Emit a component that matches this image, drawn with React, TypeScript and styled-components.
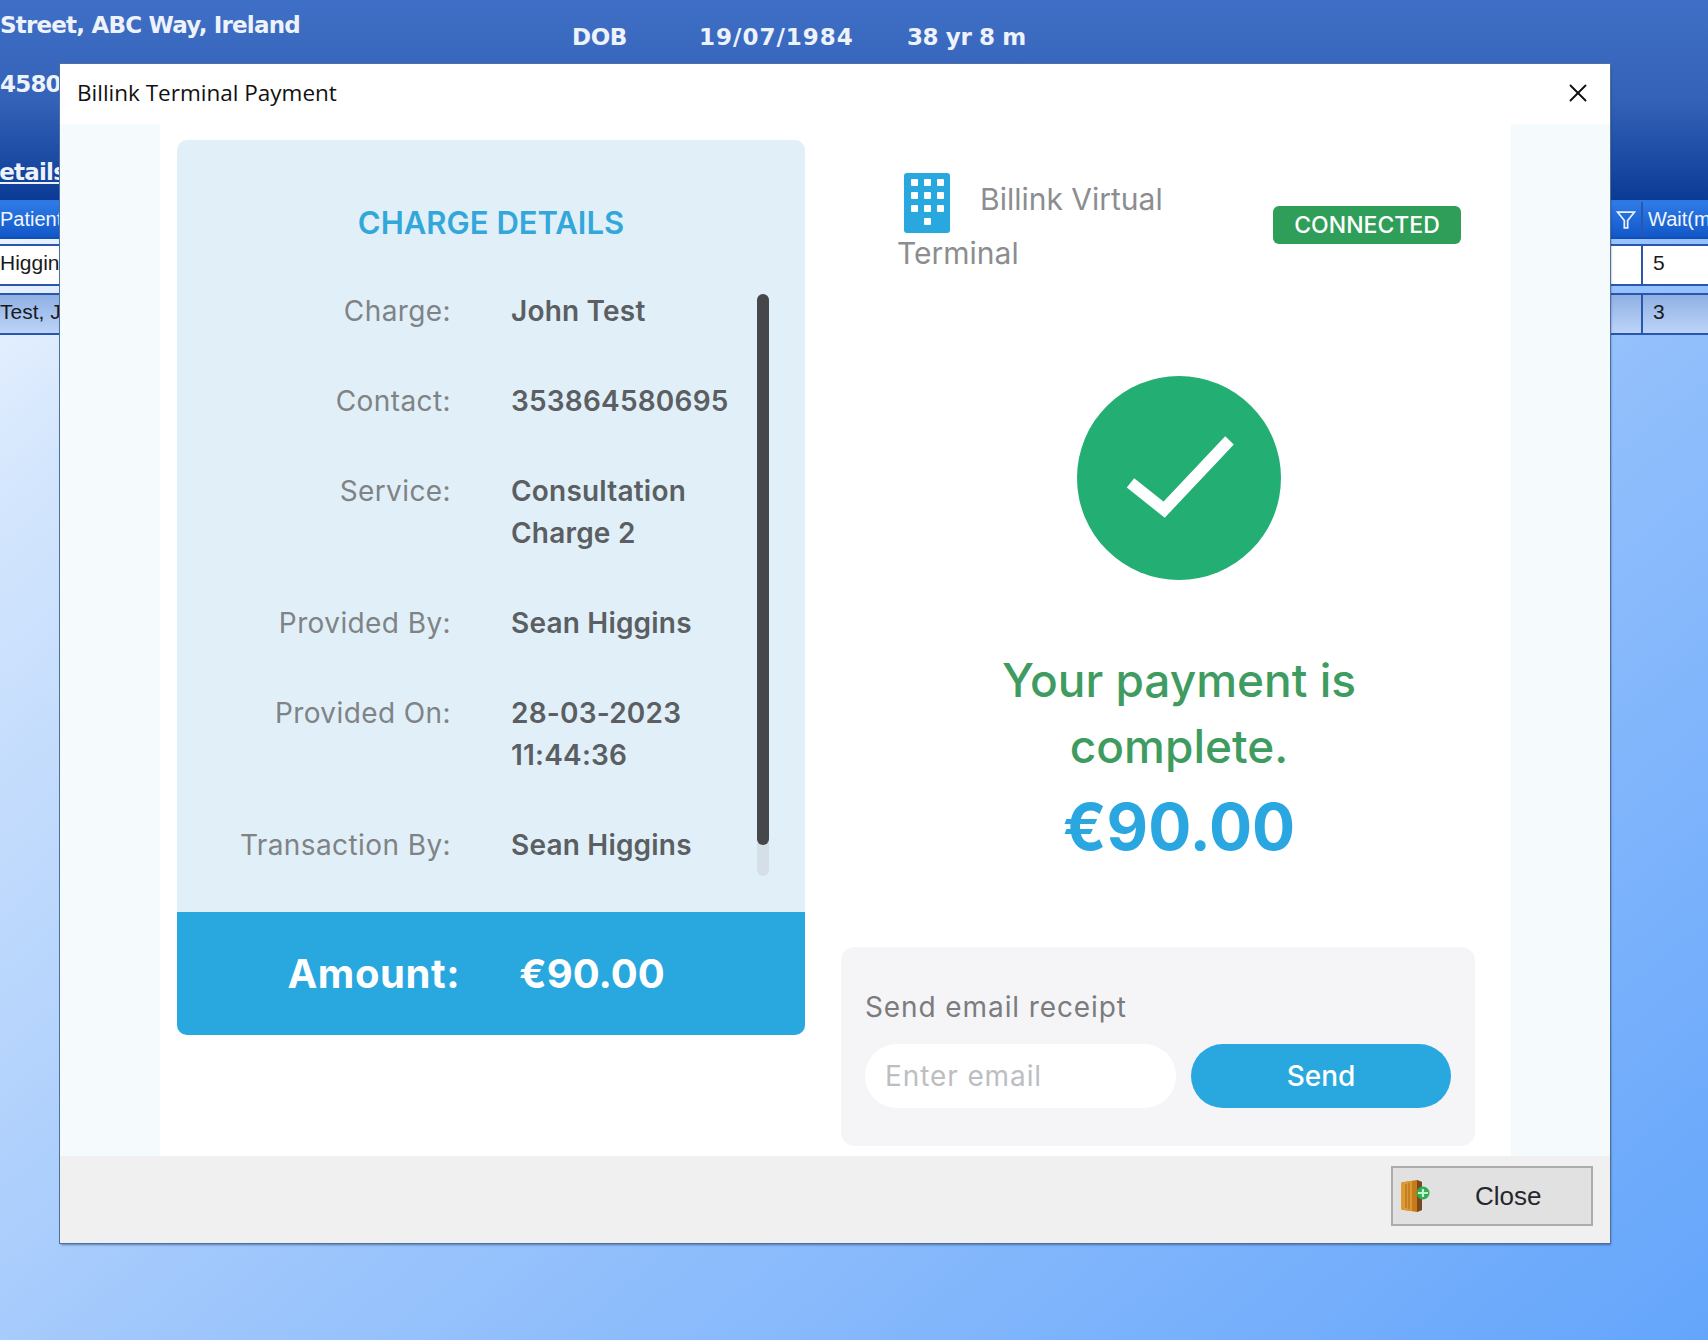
import React from "react";
import styled, { createGlobalStyle } from "styled-components";
import { X } from "lucide-react";

const Global = createGlobalStyle`
  html, body { margin: 0; padding: 0; }
  body { font-family: "Inter", "Liberation Sans", sans-serif; background: #7fb4fb; }
`;

const Page = styled.div`
  position: relative;
  width: 1708px;
  height: 1340px;
  overflow: hidden;
  background: linear-gradient(140deg, #ffffff 0%, #d4e6fd 18%, #9cc5fc 55%, #64a5fb 100%);
`;

const Header = styled.header`
  height: 200px;
  box-sizing: border-box;
  background: linear-gradient(180deg, #3f6fc6 0%, #3462b8 50%, #0b3b96 100%);
  color: #eef2fa;
  font-family: "DejaVu Sans", sans-serif;
  font-weight: 700;
  display: flex;
`;

const AddressCol = styled.div`
  width: 572px;
  font-size: 23px;
  letter-spacing: -0.8px;
`;

const AddressLine = styled.div<{ $top: number }>`
  margin-top: ${(p) => p.$top}px;
  line-height: 30px;
`;

const LinkLine = styled(AddressLine)`
  text-decoration: underline;
  margin-left: -19px;
`;

const PatientMeta = styled.div`
  display: flex;
  font-size: 23px;
  letter-spacing: -0.4px;
  padding-top: 22px;
  line-height: 30px;
`;

const MetaItem = styled.span<{ $w: number; $spacing?: number }>`
  width: ${(p) => p.$w}px;
  letter-spacing: ${(p) => p.$spacing ?? -0.4}px;
  white-space: nowrap;
`;

const TableRow = styled.div<{ $kind: "head" | "plain" | "selected"; $h: number; $top: number }>`
  display: flex;
  justify-content: space-between;
  height: ${(p) => p.$h}px;
  margin-top: ${(p) => p.$top}px;
  box-sizing: border-box;
  font-family: "Liberation Sans", sans-serif;
  font-size: ${(p) => (p.$kind === "head" ? 20 : 21)}px;
  line-height: ${(p) => (p.$kind === "head" ? p.$h - 4 : p.$h - 8)}px;
  color: ${(p) => (p.$kind === "head" ? "#f2f6ff" : "#1a1a1a")};
  border-top: 2px solid ${(p) => (p.$kind === "head" ? "#2e78e0" : "#2a56ad")};
  border-bottom: 2px solid ${(p) => (p.$kind === "head" ? "#0f4fb8" : "#2a56ad")};
  background: ${(p) =>
    p.$kind === "head"
      ? "linear-gradient(180deg, #2f7be8 0%, #1257c8 100%)"
      : p.$kind === "selected"
      ? "linear-gradient(180deg, #8fb0e4 0%, #bcd4f8 100%)"
      : "#ffffff"};
`;

const LeftCell = styled.span`
  width: 60px;
  overflow: hidden;
  white-space: nowrap;
`;

const RightCells = styled.div`
  display: flex;
  width: 98px;
`;

const FilterCell = styled.span`
  width: 31px;
  display: flex;
  align-items: center;
  justify-content: center;
`;

const WaitCell = styled.span`
  flex: 1;
  border-left: 2px solid #2a56ad;
  padding-left: 5px;
  overflow: hidden;
  white-space: nowrap;
`;

const ValueText = styled.span`
  margin-left: 5px;
`;

const Modal = styled.div`
  position: absolute;
  left: 60px;
  top: 64px;
  width: 1550px;
  height: 1179px;
  box-sizing: border-box;
  display: flex;
  flex-direction: column;
  background: #ffffff;
  outline: 1px solid #4f6f9e;
  box-shadow: 1px 2px 2px rgba(30, 60, 110, 0.55);
`;

const TitleBar = styled.div`
  height: 60px;
  flex: none;
  display: flex;
  align-items: center;
  justify-content: space-between;
  padding: 0 17px 3px 17px;
  box-sizing: border-box;
  font-family: "Open Sans", sans-serif;
  font-size: 22.5px;
  color: #111;
`;

const Body = styled.div`
  flex: 1;
  min-height: 0;
  background: #f5fafd;
  padding: 0 99px 0 100px;
  display: flex;
`;

const Sheet = styled.div`
  flex: 1;
  background: #ffffff;
  display: flex;
  gap: 36px;
  padding: 16px 36px 10px 17px;
`;

const ChargeCard = styled.section`
  width: 628px;
  height: 895px;
  flex: none;
  display: flex;
  flex-direction: column;
  border-radius: 10px;
  overflow: hidden;
  background: #e1f0f8;
`;

const CardTitle = styled.h2`
  margin: 0;
  padding-top: 64px;
  text-align: center;
  color: #33a7da;
  font-size: 31px;
  line-height: 38px;
  font-weight: 600;
`;

const CardMiddle = styled.div`
  flex: 1;
  display: flex;
  min-height: 0;
  padding-top: 48px;
`;

const Details = styled.div`
  flex: 1;
  display: flex;
  flex-direction: column;
  gap: 48px;
`;

const DetailRow = styled.div`
  display: flex;
  gap: 60px;
  font-size: 28px;
  line-height: 42px;
`;

const DetailLabel = styled.span`
  width: 274px;
  flex: none;
  text-align: right;
  color: #808386;
  letter-spacing: 0.4px;
`;

const DetailValue = styled.span`
  color: #5b5e62;
  font-weight: 600;
  white-space: pre-line;
  letter-spacing: 0.2px;
`;

const ScrollTrack = styled.div`
  width: 12px;
  height: 582px;
  margin: 4px 36px 0 0;
  border-radius: 6px;
  background: #d5dfe8;
  flex: none;
`;

const ScrollThumb = styled.div`
  height: 551px;
  border-radius: 6px;
  background: #45474a;
`;

const AmountBar = styled.div`
  height: 123px;
  flex: none;
  background: #29a8e0;
  color: #fff;
  display: flex;
  align-items: center;
  justify-content: center;
  gap: 59px;
  font-size: 40px;
  font-weight: 700;
  padding-right: 30px;
`;

const AmountLabel = styled.span`
  letter-spacing: 0.6px;
`;

const PayPanel = styled.section`
  flex: 1;
  min-width: 0;
  display: flex;
  flex-direction: column;
`;

const PanelHead = styled.div`
  display: flex;
  justify-content: space-between;
  align-items: flex-start;
  padding: 33px 14px 0 56px;
`;

const Brand = styled.div`
  width: 290px;
  font-size: 30px;
  line-height: 40px;
  color: #8b8d90;
  font-weight: 400;
`;

const BrandIcon = styled.svg`
  width: 46px;
  height: 60px;
  margin: 0 30px 0 7px;
  vertical-align: -23px;
`;

const Badge = styled.span`
  height: 38px;
  width: 188px;
  border-radius: 6px;
  background: #2f9e58;
  color: #fff;
  display: flex;
  align-items: center;
  justify-content: center;
  font-size: 23px;
  font-weight: 500;
  margin-top: 33px;
`;

const Success = styled.div`
  display: flex;
  flex-direction: column;
  align-items: center;
  padding: 103px 0 0 42px;
  width: 634px;
  box-sizing: border-box;
`;

const Check = styled.svg`
  width: 204px;
  height: 204px;
`;

const Message = styled.p`
  margin: 67px 0 0;
  text-align: center;
  color: #3f9c60;
  font-size: 46px;
  line-height: 66px;
  font-weight: 500;
`;

const Price = styled.div`
  margin-top: 6px;
  color: #2aa7e0;
  font-size: 64px;
  line-height: 84px;
  font-weight: 700;
`;

const Receipt = styled.div`
  margin-top: 78px;
  height: 201px;
  box-sizing: border-box;
  border-radius: 14px;
  background: #f5f5f7;
  padding: 38px 24px 0;
`;

const ReceiptTitle = styled.div`
  color: #7a7c80;
  font-size: 28px;
  line-height: 44px;
  letter-spacing: 0.9px;
`;

const ReceiptForm = styled.div`
  display: flex;
  gap: 15px;
  margin-top: 15px;
`;

const EmailInput = styled.input`
  width: 311px;
  height: 64px;
  box-sizing: border-box;
  border: 0;
  border-radius: 32px;
  background: #fff;
  padding: 0 20px;
  font: inherit;
  font-size: 28px;
  letter-spacing: 0.9px;
  outline: none;
  &::placeholder { color: #bdbec2; opacity: 1; }
`;

const SendButton = styled.button`
  width: 260px;
  height: 64px;
  border: 0;
  border-radius: 32px;
  background: #29a8e0;
  color: #fff;
  font: inherit;
  font-size: 28px;
  font-weight: 500;
`;

const Footer = styled.footer`
  height: 87px;
  flex: none;
  background: #f0f0f0;
  display: flex;
  justify-content: flex-end;
  align-items: flex-start;
  padding: 10px 17px 0 0;
  box-sizing: border-box;
`;

const CloseButton = styled.button`
  width: 202px;
  height: 60px;
  box-sizing: border-box;
  display: flex;
  align-items: center;
  background: #e1e1e1;
  border: 2px solid #adadad;
  padding: 0 0 0 5px;
  font-family: "Liberation Sans", sans-serif;
  font-size: 26px;
  color: #26262c;
`;

const CloseLabel = styled.span`
  margin-left: 43px;
`;

const rows: [string, string][] = [
  ["Charge:", "John Test"],
  ["Contact:", "353864580695"],
  ["Service:", "Consultation\nCharge 2"],
  ["Provided By:", "Sean Higgins"],
  ["Provided On:", "28-03-2023\n11:44:36"],
  ["Transaction By:", "Sean Higgins"],
];

const keypadDots = [0, 1, 2, 3].flatMap((r) =>
  (r === 3 ? [1] : [0, 1, 2]).map((c) => ({ x: 7 + c * 13, y: 10 + r * 13, k: `${r}-${c}` }))
);

const DoorIcon = () => (
  <svg width="34" height="34" viewBox="0 0 34 34">
    <path d="M3 5 Q3 3 6 3 L19 1 L24 3 L24 31 L19 33 L6 31 Q3 31 3 29 Z" fill="#c67a1c" />
    <path d="M3 5 Q3 3 6 3 L14 2 L14 32 L6 31 Q3 31 3 29 Z" fill="#dd9a33" />
    <path d="M8 5 V29 M11 4 V30" stroke="#a9651a" strokeWidth="1" />
    <path d="M19 1 L24 3 L24 31 L19 33 Z" fill="#7a4a1e" />
    <circle cx="25" cy="14" r="6.5" fill="#2fae55" />
    <path d="M20 14 H30 M25 10 V18" stroke="#c4f2cc" strokeWidth="2.2" />
  </svg>
);

const FilterIcon = () => (
  <svg width="20" height="20" viewBox="0 0 18 18" fill="none" stroke="#e8f1ff" strokeWidth="1.6">
    <path d="M1.5 2 H16.5 L10.5 9.5 V16 H7.5 V9.5 Z" />
  </svg>
);

export default function App() {
  return (
    <Page>
      <Global />
      <Header>
        <AddressCol>
          <AddressLine $top={10}>Street, ABC Way, Ireland</AddressLine>
          <AddressLine $top={29}>45800</AddressLine>
          <LinkLine $top={58}>Details</LinkLine>
        </AddressCol>
        <PatientMeta>
          <MetaItem $w={127}>DOB</MetaItem>
          <MetaItem $w={208} $spacing={1}>19/07/1984</MetaItem>
          <MetaItem $w={130}>38 yr 8 m</MetaItem>
        </PatientMeta>
      </Header>
      <TableRow $kind="head" $h={39} $top={0}>
        <LeftCell>Patient</LeftCell>
        <RightCells>
          <FilterCell><FilterIcon /></FilterCell>
          <WaitCell>Wait(min)</WaitCell>
        </RightCells>
      </TableRow>
      <TableRow $kind="plain" $h={42} $top={5}>
        <LeftCell>Higgins</LeftCell>
        <RightCells>
          <FilterCell />
          <WaitCell><ValueText>5</ValueText></WaitCell>
        </RightCells>
      </TableRow>
      <TableRow $kind="selected" $h={42} $top={7}>
        <LeftCell>Test, John</LeftCell>
        <RightCells>
          <FilterCell />
          <WaitCell><ValueText>3</ValueText></WaitCell>
        </RightCells>
      </TableRow>

      <Modal>
        <TitleBar>
          <span>Billink Terminal Payment</span>
          <X size={30} strokeWidth={1.5} color="#111" />
        </TitleBar>
        <Body>
          <Sheet>
            <ChargeCard>
              <CardTitle>CHARGE DETAILS</CardTitle>
              <CardMiddle>
                <Details>
                  {rows.map(([label, value]) => (
                    <DetailRow key={label}>
                      <DetailLabel>{label}</DetailLabel>
                      <DetailValue>{value}</DetailValue>
                    </DetailRow>
                  ))}
                </Details>
                <ScrollTrack>
                  <ScrollThumb />
                </ScrollTrack>
              </CardMiddle>
              <AmountBar>
                <AmountLabel>Amount:</AmountLabel>
                <span>€90.00</span>
              </AmountBar>
            </ChargeCard>
            <PayPanel>
              <PanelHead>
                <Brand>
                  <BrandIcon viewBox="0 0 46 60">
                    <rect width="46" height="60" rx="3" fill="#29a8e0" />
                    {keypadDots.map((d) => (
                      <rect key={d.k} x={d.x} y={d.y - 4} width="7" height="7" rx="1" fill="#fff" />
                    ))}
                  </BrandIcon>
                  Billink Virtual Terminal
                </Brand>
                <Badge>CONNECTED</Badge>
              </PanelHead>
              <Success>
                <Check viewBox="0 0 206 206">
                  <circle cx="103" cy="103" r="103" fill="#23ae73" />
                  <path d="M54 108 L88 135 L154 65" fill="none" stroke="#fff" strokeWidth="12" />
                </Check>
                <Message>
                  Your payment is
                  <br />
                  complete.
                </Message>
                <Price>€90.00</Price>
              </Success>
              <Receipt>
                <ReceiptTitle>Send email receipt</ReceiptTitle>
                <ReceiptForm>
                  <EmailInput placeholder="Enter email" />
                  <SendButton>Send</SendButton>
                </ReceiptForm>
              </Receipt>
            </PayPanel>
          </Sheet>
        </Body>
        <Footer>
          <CloseButton>
            <DoorIcon />
            <CloseLabel>Close</CloseLabel>
          </CloseButton>
        </Footer>
      </Modal>
    </Page>
  );
}
